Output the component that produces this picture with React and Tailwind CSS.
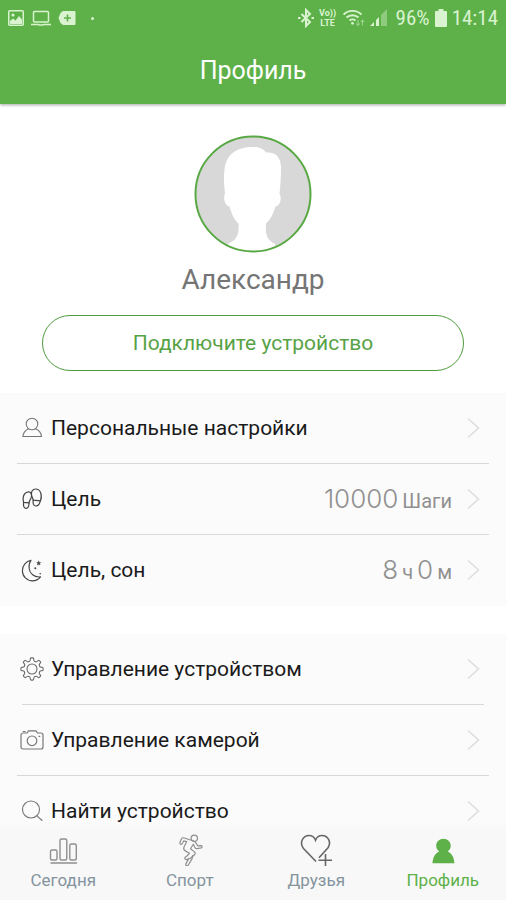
import React, { useState } from 'react';

const StatusBar = () => (
  <div className="flex h-9 items-center justify-between px-2 text-[#d9f3d0]">
    <div className="flex items-center gap-[7px]">
      <svg className="h-4 w-4" viewBox="0 0 16 16" fill="none">
        <rect x="0.75" y="0.75" width="14.5" height="14.5" rx="1" stroke="currentColor" strokeWidth="1.5" />
        <circle cx="5" cy="5" r="1.6" fill="currentColor" />
        <path d="M2 14v-3l3-2.5 2.5 2L11 6l3 3.5V14z" fill="currentColor" />
      </svg>
      <svg className="h-4 w-5" viewBox="0 0 20 16" fill="none" stroke="currentColor" strokeWidth="1.5">
        <rect x="2.5" y="1.5" width="15" height="10.5" rx="1" />
        <path d="M0 14.5h7.5l1 .6h3l1-.6H20" />
      </svg>
      <svg className="h-4 w-[18px]" viewBox="0 0 18 16">
        <path d="M5 1h11.5a1 1 0 0 1 1 1v12a1 1 0 0 1-1 1H5L2.500 13 .5 8 2.500 3z" fill="currentColor" />
        <path d="M9.500 4.500v7M6 8h7" stroke="#5eb149" strokeWidth="1.6" />
      </svg>
      <span className="ml-2 h-[3px] w-[3px] rounded-full bg-current" />
    </div>
    <div className="flex items-center gap-1">
      <svg className="h-5 w-4" viewBox="0 0 16 20" fill="none" stroke="currentColor" strokeWidth="2">
        <path d="M3.500 6l8.500 8-4 4V2l4 4-8.500 8" />
        <path d="M0 10h2.500M13.500 10H16" />
      </svg>
      <div className="flex w-5 flex-col items-center font-bold">
        <span className="text-[9px] leading-[10px]">Vo))</span>
        <span className="text-[9px] leading-[10px]">LTE</span>
      </div>
      <svg className="h-5 w-6" viewBox="0 0 24 20" fill="none" stroke="currentColor" strokeWidth="1.9">
        <path d="M1.500 6.500a13 13 0 0 1 18 0M4.500 9.500a9 9 0 0 1 12 0M7.500 12.500a5 5 0 0 1 6 0" />
        <circle cx="10.500" cy="15.300" r="1.400" fill="currentColor" stroke="none" />
        <path d="M16 12v5.500M14.200 15.500l1.800 2 1.800-2M20.500 17.500V12M18.700 14l1.800-2 1.800 2" strokeWidth="1.100" opacity="0.5" />
      </svg>
      <svg className="h-5 w-[18px]" viewBox="0 0 18 20" fill="currentColor">
        <path d="M0 18l4-4v4zM6 18v-6l3-3v9z" />
        <path d="M11 18V7l6-6v17z" opacity="0.4" />
      </svg>
      <span className="ml-1 text-[21px] leading-5 font-['Roboto_Condensed','Roboto',sans-serif]">96%</span>
      <svg className="mx-px h-[18px] w-3" viewBox="0 0 12 18" fill="currentColor">
        <path d="M3.500 0h5v2H11a1 1 0 0 1 1 1v14a1 1 0 0 1-1 1H1a1 1 0 0 1-1-1V3a1 1 0 0 1 1-1h2.500z" />
      </svg>
      <span className="text-[21px] leading-5 font-['Roboto_Condensed','Roboto',sans-serif]">14:14</span>
    </div>
  </div>
);

const iconProps = {
  viewBox: '0 0 24 24',
  fill: 'none',
  stroke: 'currentColor',
  strokeLinecap: 'round',
  strokeLinejoin: 'round',
  className: 'h-6 w-6 shrink-0',
};

const PersonIcon = () => (
  <svg {...iconProps} stroke="#777" strokeWidth="1.1">
    <circle cx="12" cy="8" r="5.800" />
    <path d="M8.500 12.700C5.500 14.200 3.300 17 2.800 20.500h18.800c-.5-3.500-2.800-6.300-6-7.800" />
  </svg>
);

const StepsIcon = () => (
  <svg {...iconProps} stroke="#444" strokeWidth="1.2">
    <path d="M3.600 15.300C2.300 11.500 3.200 5.800 7.700 5c3.600-.5 4.500 2.900 3.500 5.700-.8 2-1.900 3-2.100 5.100z" />
    <path d="M3.600 15.300c-.4 3.500.2 5.900 2.300 6.100 2.300.1 3.200-2.400 3.100-5.600" />
    <path d="M13.200 13.200c-.2-2-1.400-3.200-1.700-5.200-.5-3.200 1-6 4.100-6 4.700.1 7 5.600 4.900 11.900z" />
    <path d="M13.200 13.200c-.5 3 .1 5.500 2.400 5.800 2.500.2 4-1.800 4.700-5.100" />
  </svg>
);

const MoonIcon = () => (
  <svg {...iconProps} stroke="#444" strokeWidth="1.1">
    <path d="M11 2.300C6 3.200 2.400 7.500 2.400 12.700c0 5.700 4.500 10.200 10 10.200 3.300 0 6.200-1.500 8.200-4-6.500.8-11-3.500-11.500-8.700-.3-3 .3-5.800 1.900-7.900z" />
    <path d="M18.700 3.200l.6 1.300 1.400.1-1 1 .3 1.400-1.300-.7-1.200.7.3-1.400-1.100-1 1.400-.1z" fill="#444" strokeWidth="0.5" />
    <circle cx="15.300" cy="10.300" r="1" fill="#444" stroke="none" />
    <circle cx="20.200" cy="15.800" r="0.800" fill="#444" stroke="none" />
  </svg>
);

// one tooth, repeated every 45 degrees around the hub
const TEETH = [0, 45, 90, 135, 180, 225, 270, 315];

const GearIcon = () => (
  <svg {...iconProps} stroke="#6b6b6b" strokeWidth="1.1">
    <circle cx="12" cy="12" r="5" />
    {TEETH.map(deg => (
      <path key={deg} d="M8.900 4.500Q10 4.200 10.200 3L10.400 1.700Q10.500.9 11.200.9h1.600q.7 0 .8.8L13.800 3q.2 1.200 1.300 1.500" transform={`rotate(${deg} 12 12)`} />
    ))}
  </svg>
);

const CameraIcon = () => (
  <svg {...iconProps} stroke="#777" strokeWidth="1.2">
    <path d="M3 5h4l1.500-2.200h7.500L17.500 5H21a2 2 0 0 1 2 2v12a2 2 0 0 1-2 2H3a2 2 0 0 1-2-2V7a2 2 0 0 1 2-2z" />
    <circle cx="12" cy="12.800" r="4.800" />
    <path d="M19 8.300h.8M3.200 3.500h2" />
  </svg>
);

const SearchIcon = () => (
  <svg {...iconProps} stroke="#777" strokeWidth="1.1">
    <circle cx="11" cy="10.500" r="8.500" />
    <path d="M17 16.800l5 4.700" />
  </svg>
);

const Chevron = () => (
  <svg className="h-6 w-4 shrink-0" viewBox="0 0 16 24" fill="none" stroke="#dedede" strokeWidth="1.6">
    <path d="M2 2.500L12.500 12 2 21.500" />
  </svg>
);

const Num = ({ children }) => (
  <span className="text-[26px] font-light font-['Inter',sans-serif]">{children}</span>
);

const accountRows = [
  { label: 'Персональные настройки', icon: PersonIcon },
  {
    label: 'Цель',
    icon: StepsIcon,
    value: <><Num>10000</Num><span>Шаги</span></>,
  },
  {
    label: 'Цель, сон',
    icon: MoonIcon,
    value: <><Num>8</Num><span>ч</span><Num>0</Num><span>м</span></>,
  },
];

const deviceRows = [
  { label: 'Управление устройством', icon: GearIcon, insetDivider: true },
  { label: 'Управление камерой', icon: CameraIcon },
  { label: 'Найти устройство', icon: SearchIcon },
];

const SettingsList = ({ rows }) => (
  <ul className="bg-[#fbfbfb] px-[17px]">
    {rows.map(({ label, icon: Icon, value, insetDivider }) => (
      <li key={label} className="group">
        <button type="button" className="flex h-[70px] w-full items-center px-[3px] text-left">
          <Icon />
          <span className="ml-[7px] flex-1 pt-[2px] text-[21px] text-[#1a1a1a]">{label}</span>
          {value && <span className="mr-[14px] flex items-baseline gap-1 pt-px text-xl text-[#909090]">{value}</span>}
          <span className="mr-1 flex"><Chevron /></span>
        </button>
        <div className={`h-px bg-[#d8d8d8] group-last:bg-transparent ${insetDivider ? 'mx-[5px]' : ''}`} />
      </li>
    ))}
  </ul>
);

const tabs = [
  {
    id: 'today',
    label: 'Сегодня',
    icon: (
      <svg className="h-8 w-8" viewBox="0 0 32 32" fill="none" stroke="#8f8f8f" strokeWidth="1.4" strokeLinecap="round">
        <rect x="3.500" y="16" width="6.500" height="10" rx="1.500" />
        <rect x="13" y="5" width="6.800" height="21" rx="1.500" />
        <rect x="22.800" y="10" width="6.500" height="16" rx="1.500" />
        <path d="M4 29h25.500" />
      </svg>
    ),
  },
  {
    id: 'sport',
    label: 'Спорт',
    icon: (
      <svg className="h-8 w-8" viewBox="0 0 32 32" fill="none" stroke="#8f8f8f" strokeWidth="1.2" strokeLinecap="round" strokeLinejoin="round">
        <circle cx="20.300" cy="4.300" r="3.200" />
        <path d="M16.500 6L9.500 3.800c-1.200-.2-2 .5-2.200 1.500L5.800 8.700c-.2 1.500 1.600 2.300 2.300 1l1.700-2.900 3 .8-2.800 5.500c-.7 1.700-.2 3 1.300 3.800l4.200 2.300-2.500 2.800-1.800 1.200c-1 1.200-.2 2.400 1 2.400l3.800-1.100 4.500-3.800c1-.9 1-2-.1-2.800l-3.900-3.200 2.800-4.500 1.800 3.500c.4.8 1.200 1.100 2 1l4-.8c1.500-.5 1.200-2.300-.3-2.300l-2.900.2-2.600-3.700c-.8-1-1.800-1.900-4-2.100z" />
        <path d="M14.500 24.900l-2.600 5c-.6 1.700 1.300 2.500 2.300 1.300l3.800-6.300.9-3.600" />
      </svg>
    ),
  },
  {
    id: 'friends',
    label: 'Друзья',
    icon: (
      <svg className="h-8 w-8" viewBox="0 0 32 32" fill="none" stroke="#666" strokeWidth="1.6">
        <path d="M16 27.500L3.500 14.500C-1 8.500 3 1.500 9 1.500c3 0 5.400 1.700 6.500 4.700C16.700 3.200 19 1.500 22 1.500c6 0 9.500 6.500 6.200 12L19 23.800" />
        <path d="M25.500 20V32M18.500 26.300H32" />
      </svg>
    ),
  },
  {
    id: 'profile',
    label: 'Профиль',
    icon: (
      <svg className="h-8 w-8" viewBox="0 0 32 32" fill="#5eb149">
        <path d="M16.500 4.800c4 0 7.200 3.200 7.200 7 0 2.500-1 4.300-3 5.600 4 1.700 6.500 5.900 6.700 11.900H5.500c.2-6 2.700-10.200 6.700-11.900-2-1.300-3-3.100-3-5.600 0-3.800 3.300-7 7.300-7z" />
      </svg>
    ),
  },
];

const TabBar = () => {
  const [active, setActive] = useState('profile');

  return (
    <nav className="flex h-[74px] shrink-0 bg-[#f8f8f8] shadow-[0_0_3px_1px_#f8f8f8]">
      {tabs.map(tab => (
        <button
          key={tab.id}
          type="button"
          onClick={() => setActive(tab.id)}
          className={`flex flex-1 flex-col items-center pt-2 text-[17px] leading-7 ${active === tab.id ? 'text-[#5eb149]' : 'text-[#84949e]'}`}
        >
          {tab.icon}
          {tab.label}
        </button>
      ))}
    </nav>
  );
};

export default function App() {
  return (
    <div className="flex h-screen flex-col bg-white font-['Roboto',sans-serif]">
      <header className="z-10 h-[104px] shrink-0 bg-[#5eb149] shadow-[0_1px_3px_rgba(0,0,0,0.35)]">
        <StatusBar />
        <h1 className="flex h-[68px] items-center justify-center pt-[2px] text-[25px] text-white">Профиль</h1>
      </header>

      <main className="min-h-0 flex-1 overflow-y-auto [scrollbar-width:none]">
        <section className="flex flex-col items-center px-[42px] pt-[31px] pb-[22px]">
          <svg className="h-[118px] w-[118px]" viewBox="0 0 118 118">
            <defs>
              <clipPath id="avatar">
                <circle cx="59" cy="59" r="57" />
              </clipPath>
            </defs>
            <circle cx="59" cy="59" r="57" fill="#d8d8d8" />
            <path
              clipPath="url(#avatar)"
              fill="#fff"
              d="M59 12c5 0 10 1 13 5.500 10-1 15 5 15 15.500 0 9-.5 17-1.500 26 2.500 3 1 12-4 12.500-2 7-5 13-9.500 17-.5 10 0 16 9 20.500V118H34v-9c10-4.500 11-10.500 10.500-20.500-4.500-4-7-10-9-17-5-1-6.500-9-4.500-13-1-9-1.500-16-.5-24C32 20 42 12 59 12z"
            />
            <circle cx="59" cy="59" r="57.500" fill="none" stroke="#58a844" strokeWidth="2" />
          </svg>
          <h2 className="mt-[7px] text-[28px] leading-10 text-[#757575]">Александр</h2>
          <button type="button" className="mt-[15px] h-14 w-full rounded-full border border-[#4f9a3c] pt-[2px] text-[21px] text-[#58a246]">
            Подключите устройство
          </button>
        </section>

        <SettingsList rows={accountRows} />
        <div className="h-7" />
        <SettingsList rows={deviceRows} />
      </main>

      <TabBar />
    </div>
  );
}
